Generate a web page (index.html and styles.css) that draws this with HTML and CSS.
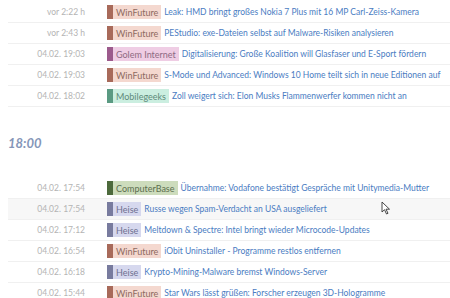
FILE: index.html
```html
<!DOCTYPE html>
<html lang="de">
<head>
  <meta charset="UTF-8" />
  <meta name="viewport" content="width=device-width, initial-scale=1" />
  <title>News</title>
  <link rel="stylesheet" href="styles.css">
</head>
<body>
  <div class="feed">
    <div class="group">
      <div class="row">
        <span class="time">vor 2:22 h</span>
        <span class="source winfuture">WinFuture</span>
        <a class="title" href="#">Leak: HMD bringt großes Nokia 7 Plus mit 16 MP Carl-Zeiss-Kamera</a>
      </div>
      <div class="row">
        <span class="time">vor 2:43 h</span>
        <span class="source winfuture">WinFuture</span>
        <a class="title" href="#">PEStudio: exe-Dateien selbst auf Malware-Risiken analysieren</a>
      </div>
      <div class="row">
        <span class="time">04.02. 19:03</span>
        <span class="source golem">Golem Internet</span>
        <a class="title" href="#">Digitalisierung: Große Koalition will Glasfaser und E-Sport fördern</a>
      </div>
      <div class="row">
        <span class="time">04.02. 19:03</span>
        <span class="source winfuture">WinFuture</span>
        <a class="title" href="#">S-Mode und Advanced: Windows 10 Home teilt sich in neue Editionen auf</a>
      </div>
      <div class="row">
        <span class="time">04.02. 18:02</span>
        <span class="source mobilegeeks">Mobilegeeks</span>
        <a class="title" href="#">Zoll weigert sich: Elon Musks Flammenwerfer kommen nicht an</a>
      </div>
    </div>

    <h2 class="group-head">18:00</h2>

    <div class="group">
      <div class="row">
        <span class="time">04.02. 17:54</span>
        <span class="source computerbase">ComputerBase</span>
        <a class="title" href="#">Übernahme: Vodafone bestätigt Gespräche mit Unitymedia-Mutter</a>
      </div>
      <div class="row hover">
        <span class="time">04.02. 17:54</span>
        <span class="source heise">Heise</span>
        <a class="title" href="#">Russe wegen Spam-Verdacht an USA ausgeliefert</a>
        <svg class="cursor" width="10" height="14" viewBox="0 0 10 14">
          <path d="M1 1 L1 11 L3.5 8.7 L5.5 13 L7 12.3 L5 8.2 L8.5 8.2 Z" fill="#fff" stroke="#333" stroke-width="0.9" stroke-linejoin="round"/>
        </svg>
      </div>
      <div class="row">
        <span class="time">04.02. 17:12</span>
        <span class="source heise">Heise</span>
        <a class="title" href="#">Meltdown &amp; Spectre: Intel bringt wieder Microcode-Updates</a>
      </div>
      <div class="row">
        <span class="time">04.02. 16:54</span>
        <span class="source winfuture">WinFuture</span>
        <a class="title" href="#">iObit Uninstaller - Programme restlos entfernen</a>
      </div>
      <div class="row">
        <span class="time">04.02. 16:18</span>
        <span class="source heise">Heise</span>
        <a class="title" href="#">Krypto-Mining-Malware bremst Windows-Server</a>
      </div>
      <div class="row">
        <span class="time">04.02. 15:44</span>
        <span class="source winfuture">WinFuture</span>
        <a class="title" href="#">Star Wars lässt grüßen: Forscher erzeugen 3D-Hologramme</a>
      </div>
    </div>
  </div>
</body>
</html>
```

FILE: styles.css
```css
html, body {
  margin: 0;
  padding: 0;
  height: 100%;
  overflow: hidden;
}

body {
  background: #fff;
  font-family: 'Lato', 'Open Sans', sans-serif;
  font-size: 8.5px;
  color: #333;
}

.feed {
  padding: 2px 0 0 8px;
}

.row {
  position: relative;
  display: flex;
  align-items: center;
  height: 20px;
  border-bottom: 1px solid #f0f0f0;
  white-space: nowrap;
}

.row.hover {
  background: #f7f7f7;
}

.time {
  width: 77px;
  text-align: right;
  color: #b4b4b4;
  margin-right: 22px;
  flex-shrink: 0;
}

.source {
  display: inline-flex;
  align-items: center;
  height: 14px;
  padding: 0 3px;
  border-left: 6px solid;
  font-size: 9px;
  flex-shrink: 0;
}

.title {
  margin-left: 3px;
  color: #4a7cc2;
  text-decoration: none;
}

.winfuture {
  background: #f4d8cf;
  border-color: #a86a5a;
  color: #8e6a60;
}

.golem {
  background: #efcde4;
  border-color: #9c5a8c;
  color: #8e6a82;
}

.mobilegeeks {
  background: #cbeee0;
  border-color: #5a9a82;
  color: #5e8a7a;
}

.computerbase {
  background: #cddcbc;
  border-color: #4d6a3c;
  color: #5c6e4e;
}

.heise {
  background: #d6d8ee;
  border-color: #787b9e;
  color: #6e7090;
}

.group-head {
  margin: 26px 0 25px 0;
  height: 20px;
  line-height: 20px;
  font-size: 13px;
  font-style: italic;
  font-weight: bold;
  color: #8596b8;
}

.cursor {
  position: absolute;
  left: 373px;
  top: 2px;
}
```
